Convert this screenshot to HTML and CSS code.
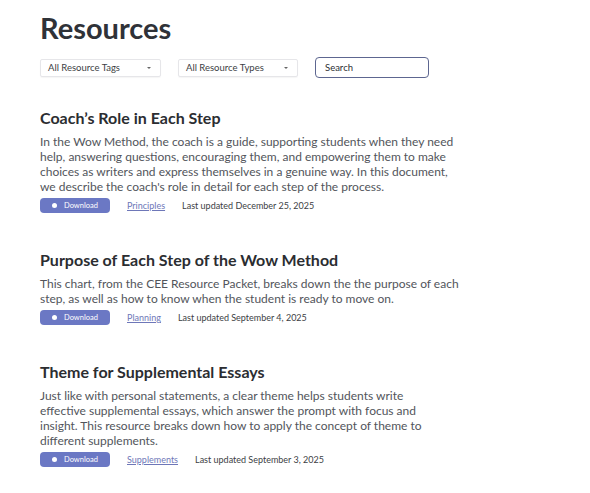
FILE: index.html
```
<!DOCTYPE html>
<html>
<head>
<meta charset="utf-8">
<link rel="stylesheet" href="styles.css">
</head>
<body>
<main class="page">
  <h1 class="page-title">Resources</h1>
  <div class="filters">
    <div class="select select-tags"><span>All Resource Tags</span><span class="caret"></span></div>
    <div class="select select-types"><span>All Resource Types</span><span class="caret"></span></div>
    <div class="search">Search</div>
  </div>
  <section class="resources">
    <article class="resource">
      <h2 class="resource-title">Coach’s Role in Each Step</h2>
      <p class="resource-desc">In the Wow Method, the coach is a guide, supporting students when they need help, answering questions, encouraging them, and empowering them to make choices as writers and express themselves in a genuine way. In this document, we describe the coach's role in detail for each step of the process.</p>
      <div class="meta">
        <a class="btn"><span class="dot"></span>Download</a>
        <a class="tag">Principles</a>
        <span class="updated">Last updated December 25, 2025</span>
      </div>
    </article>
    <article class="resource">
      <h2 class="resource-title">Purpose of Each Step of the Wow Method</h2>
      <p class="resource-desc">This chart, from the CEE Resource Packet, breaks down the the purpose of each step, as well as how to know when the student is ready to move on.</p>
      <div class="meta">
        <a class="btn"><span class="dot"></span>Download</a>
        <a class="tag">Planning</a>
        <span class="updated">Last updated September 4, 2025</span>
      </div>
    </article>
    <article class="resource">
      <h2 class="resource-title">Theme for Supplemental Essays</h2>
      <p class="resource-desc resource-desc-narrow">Just like with personal statements, a clear theme helps students write effective supplemental essays, which answer the prompt with focus and insight. This resource breaks down how to apply the concept of theme to different supplements.</p>
      <div class="meta">
        <a class="btn"><span class="dot"></span>Download</a>
        <a class="tag">Supplements</a>
        <span class="updated">Last updated September 3, 2025</span>
      </div>
    </article>
  </section>
</main>
</body>
</html>
```
FILE: styles.css
```
* { box-sizing: border-box; }
html, body { margin: 0; padding: 0; background: #fff; }
body { font-family: "Lato", "Noto Sans", sans-serif; color: #3a3d44; }
.page { padding: 11px 40px 0 40px; width: 520px; }
.page-title { margin: 0; font-size: 29px; font-weight: 700; color: #2f3238; line-height: 34px; }
.filters { display: flex; align-items: center; margin-top: 12px; gap: 17px; }
.select { display: flex; align-items: center; justify-content: space-between; height: 18px; border: 1px solid #e6e6e9; border-radius: 2px; padding: 0 7px; font-size: 9.5px; color: #3d3f45; box-shadow: 0 1px 1px rgba(0,0,0,0.04); }
.select-tags { width: 121px; }
.select-types { width: 120px; }
.caret { width: 0; height: 0; border-left: 2.5px solid transparent; border-right: 2.5px solid transparent; border-top: 2.5px solid #666; margin-right: 2px; }
.search { width: 114px; height: 21px; border: 1.5px solid #5d6690; border-radius: 4px; font-size: 9.5px; padding: 4px 9px; color: #2c2e33; }
.resources { margin-top: 30px; display: flex; flex-direction: column; gap: 37px; }
.resource-title { margin: 0; font-size: 16px; font-weight: 700; color: #2b2d31; line-height: 20px; }
.resource-desc { margin: 6px 0 0; font-size: 12px; line-height: 15px; color: #52555b; width: 425px; }
.resource-desc-narrow { width: 405px; }
.meta { display: flex; align-items: center; margin-top: 4px; font-size: 9px; }
.btn { display: flex; align-items: center; width: 70px; height: 15px; background: #6b78c4; border-radius: 4px; color: #fff; font-size: 7.5px; padding-left: 12px; gap: 7px; }
.dot { width: 5px; height: 5px; border-radius: 50%; background: #fff; }
.tag { margin-left: 17px; color: #6e77b8; text-decoration: underline; }
.updated { margin-left: 17px; color: #3c3e44; }
```
